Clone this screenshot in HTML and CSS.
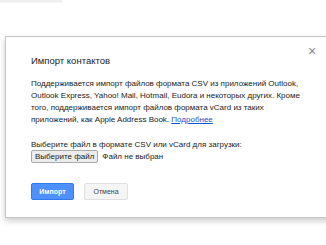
FILE: index.html
```html
<!DOCTYPE html>
<html lang="ru">
<head>
    <meta charset="UTF-8">
    <title>Импорт контактов</title>
    <link rel="stylesheet" href="styles.css">
</head>
<body>
    <div class="topbar"></div>

    <div class="dialog">
        <span class="close">&#215;</span>
        <h2 class="dialog-title">Импорт контактов</h2>
        <p class="dialog-text">
            Поддерживается импорт файлов формата CSV из приложений Outlook,<br>
            Outlook Express, Yahoo! Mail, Hotmail, Eudora и некоторых других. Кроме<br>
            того, поддерживается импорт файлов формата vCard из таких<br>
            приложений, как Apple Address Book. <a href="#">Подробнее</a>
        </p>

        <div class="upload">
            <p class="upload-label">Выберите файл в формате CSV или vCard для загрузки:</p>
            <div class="file-row">
                <button class="file-btn">Выберите файл</button>
                <span>Файл не выбран</span>
            </div>
        </div>

        <div class="actions">
            <button class="btn btn-primary">Импорт</button>
            <button class="btn btn-cancel">Отмена</button>
        </div>
    </div>
</body>
</html>
```

FILE: styles.css
```css
* {
    box-sizing: border-box;
    margin: 0;
    padding: 0;
}

body {
    font-family: 'Liberation Sans', Arial, sans-serif;
    background: #fff;
    color: #222;
    overflow: hidden;
    width: 326px;
    height: 245px;
}

.topbar {
    width: 62px;
    height: 3px;
    background: #eee;
    border-bottom: 1px solid #f6f6f6;
}

/* окно импорта */
.dialog {
    position: relative;
    margin: 33px 0 0 5px;
    width: 340px;
    height: 182px;
    border: 1px solid #c6c6c6;
    background: #fff;
    box-shadow: 0 3px 6px rgba(0, 0, 0, 0.2);
    padding: 17px 0 0 25px;
}

.close {
    position: absolute;
    left: 302px;
    top: 7px;
    font-size: 14px;
    line-height: 14px;
    color: #888;
}

.dialog-title {
    font-size: 9.5px;
    font-weight: normal;
    color: #222;
    line-height: 14px;
    margin-bottom: 10px;
}

.dialog-text {
    font-size: 8px;
    line-height: 12px;
    color: #222;
    white-space: nowrap;
}

.dialog-text a {
    color: #15c;
}

.upload {
    margin-top: 14px;
    font-size: 8px;
}

.upload-label {
    line-height: 10px;
}

.file-row {
    display: flex;
    align-items: center;
    gap: 4px;
}

.file-btn {
    height: 13px;
    font-family: inherit;
    font-size: 8px;
    padding: 0 3px;
    background: #ececec;
    border: 1px solid #aaa;
    border-radius: 2px;
    color: #222;
}

.actions {
    display: flex;
    gap: 10px;
    margin-top: 20px;
}

.btn {
    height: 17px;
    font-family: inherit;
    font-size: 7px;
    border-radius: 2px;
}

.btn-primary {
    width: 43px;
    background: #4d90fe;
    border: 1px solid #3079ed;
    color: #fff;
    font-weight: bold;
}

.btn-cancel {
    width: 44px;
    background: #f5f5f5;
    border: 1px solid #e0e0e0;
    color: #444;
}
```
